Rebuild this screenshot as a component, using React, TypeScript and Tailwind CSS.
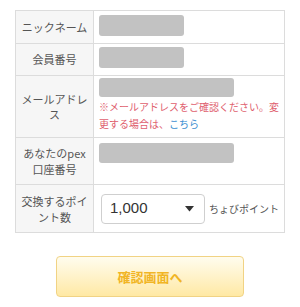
export default function App() {
  const font = { fontFamily: '"Noto Sans CJK JP", "Noto Sans", sans-serif' }
  return (
    <div className="w-[300px] h-[307px] bg-white text-[#555]" style={font}>
      <div className="pt-[10px] pl-[15px]">
        <div className="w-[270px] border border-[#dcdcdc]">
          {/* nickname */}
          <div className="flex h-[33px] border-b border-[#dcdcdc]">
            <div className="w-[78px] shrink-0 bg-[#f6f6f6] border-r border-[#dcdcdc] flex items-center justify-center text-[11px]">ニックネーム</div>
            <div className="flex-1 pl-[5px] pt-[4px]">
              <div className="w-[85px] h-[21px] rounded-[3px] bg-[#c2c2c2]"></div>
            </div>
          </div>
          {/* member no */}
          <div className="flex h-[32px] border-b border-[#dcdcdc]">
            <div className="w-[78px] shrink-0 bg-[#f6f6f6] border-r border-[#dcdcdc] flex items-center justify-center text-[11px]">会員番号</div>
            <div className="flex-1 pl-[5px] pt-[3px]">
              <div className="w-[85px] h-[21px] rounded-[3px] bg-[#c2c2c2]"></div>
            </div>
          </div>
          {/* mail */}
          <div className="flex h-[62px] border-b border-[#dcdcdc]">
            <div className="w-[78px] shrink-0 bg-[#f6f6f6] border-r border-[#dcdcdc] flex items-center justify-center text-center text-[11px] leading-[15px] px-[4px]">メールアドレス</div>
            <div className="flex-1 pl-[5px] pt-[2px] pr-[4px]">
              <div className="w-[135px] h-[19px] rounded-[3px] bg-[#c2c2c2]"></div>
              <p className="mt-[1px] text-[10px] leading-[17px] text-[#e0606e]">
                ※メールアドレスをご確認ください。変更する場合は、<span className="text-[#3d8fd1]">こちら</span>
              </p>
            </div>
          </div>
          {/* pex */}
          <div className="flex h-[47px] border-b border-[#dcdcdc]">
            <div className="w-[78px] shrink-0 bg-[#f6f6f6] border-r border-[#dcdcdc] flex items-center justify-center text-center text-[11px] leading-[16px] px-[4px]">あなたのpex口座番号</div>
            <div className="flex-1 pl-[5px] pt-[5px]">
              <div className="w-[135px] h-[20px] rounded-[3px] bg-[#c2c2c2]"></div>
            </div>
          </div>
          {/* points */}
          <div className="flex h-[47px]">
            <div className="w-[78px] shrink-0 bg-[#f6f6f6] border-r border-[#dcdcdc] flex items-center justify-center text-center text-[11px] leading-[16px] px-[4px]">交換するポイント数</div>
            <div className="flex-1 pl-[7px] flex items-center gap-[4px]">
              <div className="w-[104px] h-[30px] border border-[#cfcfcf] rounded-[4px] flex items-center justify-between pl-[8px] pr-[10px] text-[#333]">
                <span className="text-[15px]" style={{ fontFamily: '"Liberation Sans", sans-serif' }}>1,000</span>
                <svg width="9" height="6" viewBox="0 0 9 6"><path d="M0 0h9L4.5 5.5z" fill="#333" /></svg>
              </div>
              <span className="text-[10px]">ちょびポイント</span>
            </div>
          </div>
        </div>
      </div>
      <div className="flex justify-center pt-[23px]">
        <button className="w-[188px] h-[41px] rounded-[4px] border border-[#f1d384] bg-gradient-to-b from-[#fffcee] to-[#ffe9a4] text-[#f1b525] text-[13px] font-bold">
          確認画面へ
        </button>
      </div>
    </div>
  )
}
